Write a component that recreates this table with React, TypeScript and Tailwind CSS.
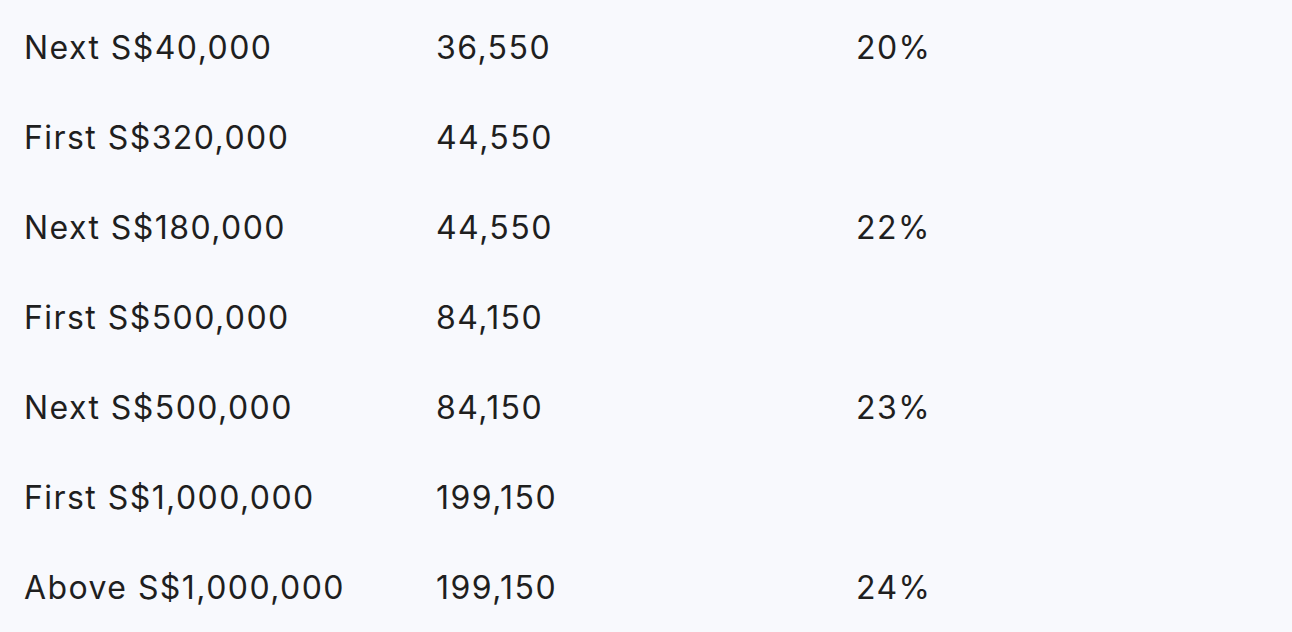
const rows = [
  { band: 'Next S$40,000', tax: '36,550', rate: '20%' },
  { band: 'First S$320,000', tax: '44,550', rate: '' },
  { band: 'Next S$180,000', tax: '44,550', rate: '22%' },
  { band: 'First S$500,000', tax: '84,150', rate: '' },
  { band: 'Next S$500,000', tax: '84,150', rate: '23%' },
  { band: 'First S$1,000,000', tax: '199,150', rate: '' },
  { band: 'Above S$1,000,000', tax: '199,150', rate: '24%' },
];

export default function App() {
  return (
    <div className="h-[632px] w-full overflow-hidden bg-[#f8f9fd] pt-[3px] font-['Inter',sans-serif] text-[#1f1f1f]">
      {rows.map((r) => (
        <div key={r.band} className="grid h-[90px] grid-cols-[412px_420px_1fr] items-center pl-[24px] text-[32px] leading-none tracking-[0.045em]">
          <span>{r.band}</span>
          <span>{r.tax}</span>
          <span>{r.rate}</span>
        </div>
      ))}
    </div>
  );
}
